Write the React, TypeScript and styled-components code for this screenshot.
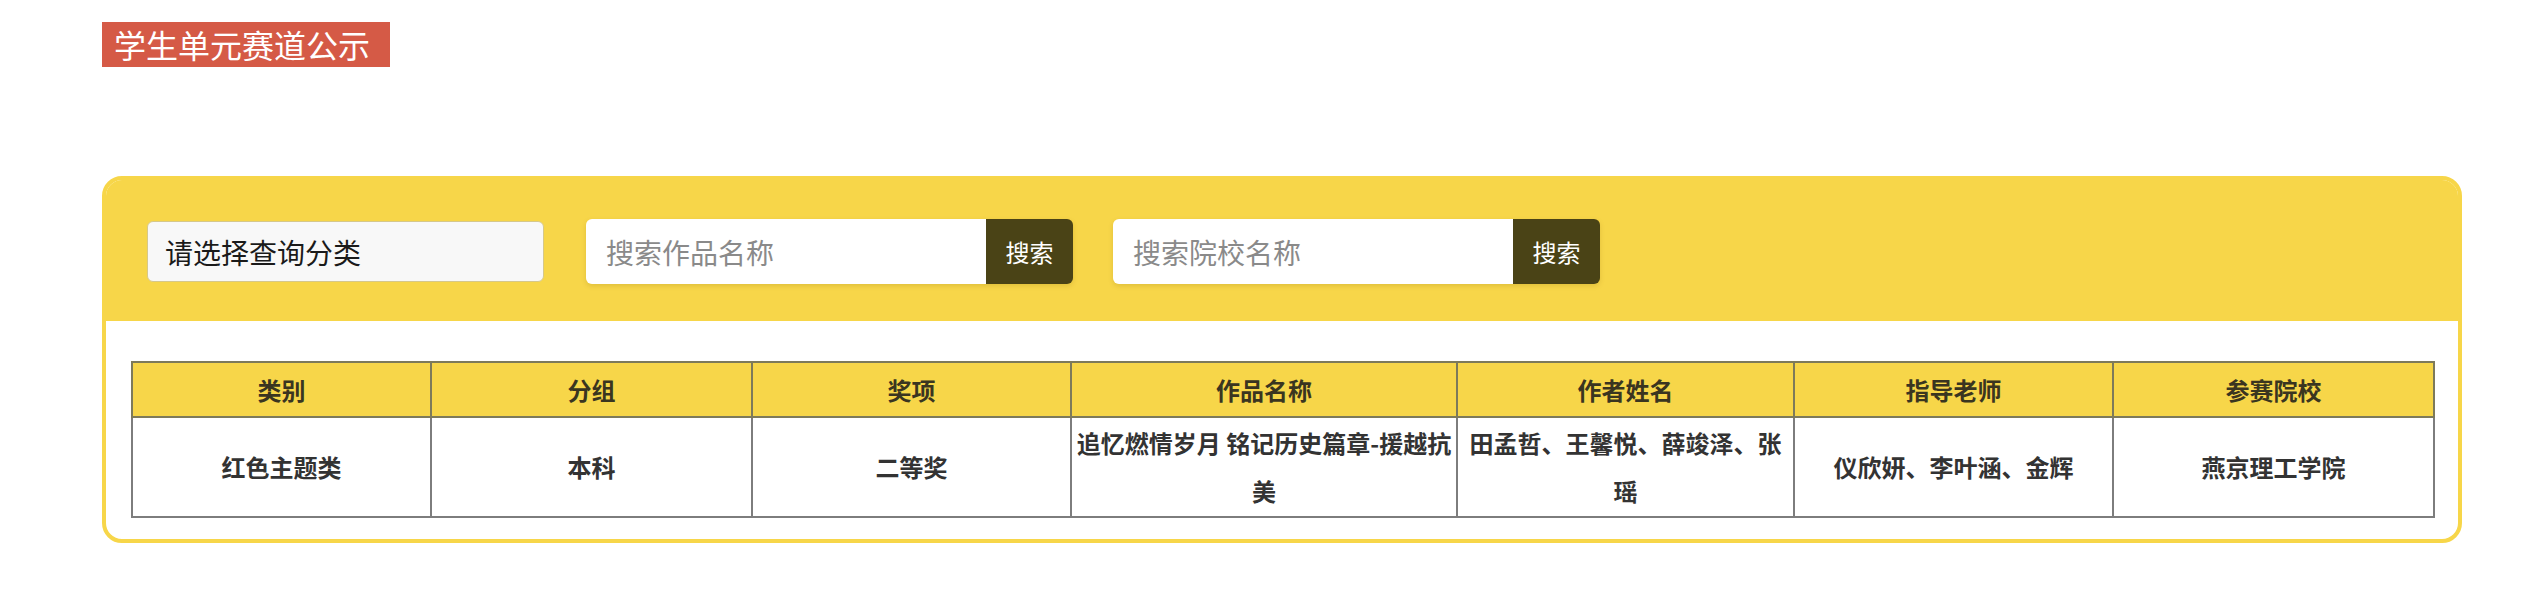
import React from 'react'
import styled, { createGlobalStyle } from 'styled-components'

const GlobalStyle = createGlobalStyle`
  html, body {
    margin: 0;
    padding: 0;
    background: #ffffff;
    font-family: "Noto Sans CJK SC", "Noto Sans", sans-serif;
  }
`

const yellow = '#F7D649'

const columns = [
  { title: '类别', width: 299 },
  { title: '分组', width: 321 },
  { title: '奖项', width: 319 },
  { title: '作品名称', width: 386 },
  { title: '作者姓名', width: 337 },
  { title: '指导老师', width: 319 },
  { title: '参赛院校', width: 321 },
]

const rows = [
  [
    '红色主题类',
    '本科',
    '二等奖',
    '追忆燃情岁月 铭记历史篇章-援越抗美',
    '田孟哲、王馨悦、薛竣泽、张瑶',
    '仪欣妍、李叶涵、金辉',
    '燕京理工学院',
  ],
]

const App = () => {
  return (
    <Page>
      <GlobalStyle />
      <Title>学生单元赛道公示</Title>
      <Card>
        <Toolbar>
          <Select>
            <option>请选择查询分类</option>
          </Select>
          <SearchGroup>
            <SearchInput placeholder='搜索作品名称' />
            <SearchButton>搜索</SearchButton>
          </SearchGroup>
          <SearchGroup>
            <SearchInput placeholder='搜索院校名称' />
            <SearchButton>搜索</SearchButton>
          </SearchGroup>
        </Toolbar>
        <Body>
          <Table>
            <colgroup>
              {columns.map((c) => (
                <col key={c.title} style={{ width: c.width }} />
              ))}
            </colgroup>
            <thead>
              <tr>
                {columns.map((c) => (
                  <Th key={c.title}>{c.title}</Th>
                ))}
              </tr>
            </thead>
            <tbody>
              {rows.map((r, i) => (
                <tr key={i}>
                  {r.map((cell, j) => (
                    <Td key={j}>{cell}</Td>
                  ))}
                </tr>
              ))}
            </tbody>
          </Table>
        </Body>
      </Card>
    </Page>
  )
}

export default App

const Page = styled.div`
  padding: 22px 0 40px 102px;
`
const Title = styled.div`
  display: inline-block;
  height: 45px;
  line-height: 45px;
  padding: 0 20px 0 12px;
  background: #D55A46;
  color: #ffffff;
  font-size: 32px;
  white-space: nowrap;
`
const Card = styled.div`
  margin-top: 109px;
  width: 2360px;
  box-sizing: border-box;
  border: 4px solid ${yellow};
  border-radius: 20px;
  overflow: hidden;
  background: #ffffff;
`
const Toolbar = styled.div`
  display: flex;
  align-items: center;
  background: ${yellow};
  padding: 39px 41px 37px;
`
const Select = styled.select`
  appearance: none;
  width: 397px;
  height: 61px;
  box-sizing: border-box;
  padding: 0 17px;
  border: 1px solid #d6c88a;
  border-radius: 6px;
  background: #f8f8f8;
  color: #1a1a1a;
  font-family: inherit;
  font-size: 28px;
  outline: none;
`
const SearchGroup = styled.div`
  display: flex;
  height: 65px;
  margin-left: 42px;
  border-radius: 6px;
  box-shadow: 0 2px 5px rgba(120, 90, 0, 0.18);
  & + & {
    margin-left: 40px;
  }
`
const SearchInput = styled.input`
  width: 400px;
  height: 100%;
  box-sizing: border-box;
  padding: 0 20px;
  border: none;
  border-radius: 6px 0 0 6px;
  background: #ffffff;
  font-family: inherit;
  font-size: 28px;
  color: #333;
  outline: none;
  &::placeholder {
    color: #8a8a8a;
  }
`
const SearchButton = styled.button`
  width: 87px;
  height: 100%;
  border: none;
  border-radius: 0 6px 6px 0;
  background: #4A4316;
  color: #ffffff;
  font-family: inherit;
  font-size: 24px;
  padding: 0;
`
const Body = styled.div`
  padding: 40px 25px 21px;
`
const Table = styled.table`
  width: 2302px;
  table-layout: fixed;
  border-collapse: collapse;
  border: 2px solid #7d7d7d;
  color: #333333;
  font-size: 24px;
  font-weight: 700;
`
const Th = styled.th`
  height: 53px;
  padding: 0 4px;
  background: ${yellow};
  border: 2px solid #7d7a5a;
  text-align: center;
  font-weight: 700;
  color: #3a3520;
`
const Td = styled.td`
  height: 98px;
  padding: 0 4px;
  border: 2px solid #7d7d7d;
  text-align: center;
  line-height: 48px;
  word-break: break-all;
`
